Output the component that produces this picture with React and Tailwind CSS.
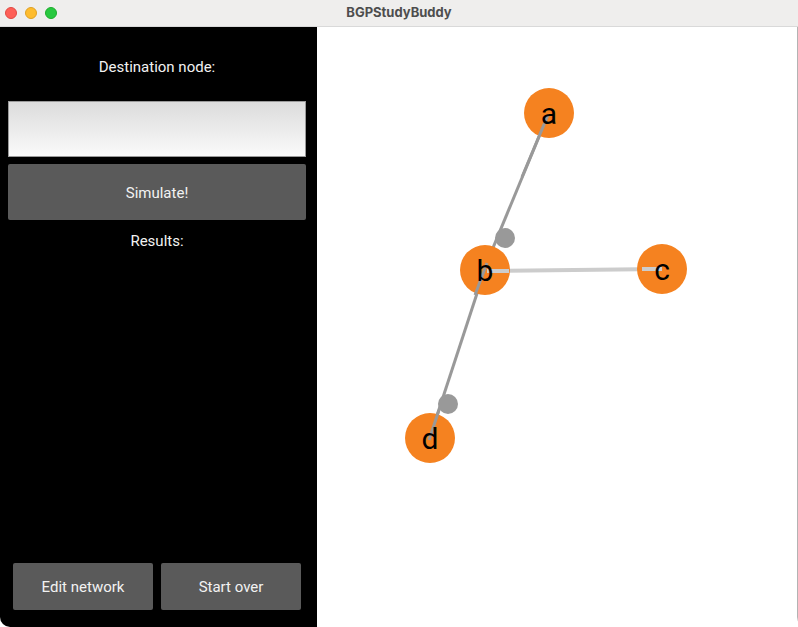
import React from 'react';

const nodes = [
    { id: 'a', x: 232, y: 86 },
    { id: 'b', x: 168, y: 243 },
    { id: 'c', x: 345, y: 242 },
    { id: 'd', x: 113, y: 411 },
];

const NetworkGraph = () => (
    <svg width="480" height="600" viewBox="0 0 480 600" className="block">
        {/* b - c link */}
        <line x1="168" y1="244" x2="345" y2="242" stroke="#cccccc" strokeWidth="4" />
        {/* a - b - d links */}
        <line x1="231" y1="88" x2="166" y2="245" stroke="#999999" strokeWidth="3" />
        <line x1="170" y1="236" x2="112" y2="413" stroke="#999999" strokeWidth="3" />
        {nodes.map((n) => (
            <circle key={n.id} cx={n.x} cy={n.y} r="25" fill="#f58220" />
        ))}
        {/* link ends drawn over the nodes */}
        <line x1="231" y1="88" x2="205" y2="150" stroke="#999999" strokeWidth="3" />
        <line x1="170" y1="236" x2="158" y2="268" stroke="#999999" strokeWidth="3" />
        <line x1="122" y1="383" x2="112" y2="413" stroke="#999999" strokeWidth="3" />
        <line x1="170" y1="244" x2="192" y2="244" stroke="#cccccc" strokeWidth="4" />
        <line x1="325" y1="242" x2="345" y2="242" stroke="#cccccc" strokeWidth="4" />
        <circle cx="188" cy="211" r="10" fill="#999999" />
        <circle cx="131" cy="377" r="10" fill="#999999" />
        {nodes.map((n) => (
            <text
                key={n.id}
                x={n.x}
                y={n.y + 11}
                textAnchor="middle"
                fontSize="30"
                fontFamily="Roboto, sans-serif"
                fill="#000000"
            >
                {n.id}
            </text>
        ))}
    </svg>
);

const App = () => {
    return (
        <div className="w-[798px] h-[627px] bg-white overflow-hidden rounded-b-[10px] flex flex-col" style={{ fontFamily: 'Roboto, "Liberation Sans", sans-serif' }}>
            {/* title bar */}
            <div className="h-[27px] shrink-0 bg-[#efeeed] border-b border-[#d9d9d9] flex items-center relative">
                <div className="flex items-center gap-[8px] pl-[5px]">
                    <span className="w-[12px] h-[12px] rounded-full bg-[#fe5f57] border border-[#e14942]" />
                    <span className="w-[12px] h-[12px] rounded-full bg-[#febc2e] border border-[#dfa123]" />
                    <span className="w-[12px] h-[12px] rounded-full bg-[#28c840] border border-[#1dad2b]" />
                </div>
                <div className="absolute inset-0 flex items-center justify-center text-[13px] font-bold text-[#4d4d4d]" style={{ fontFamily: '"Inter", "Liberation Sans", sans-serif' }}>
                    BGPStudyBuddy
                </div>
            </div>

            <div className="flex flex-1 min-h-0">
                {/* left controls */}
                <div className="w-[317px] bg-black flex flex-col text-[#f2f2f2] text-[15px]">
                    <div className="pt-[32px] text-center leading-[16px] pr-[3px]">Destination node:</div>
                    <div className="mt-[26px] ml-[8px] w-[298px] h-[56px] border border-[#9a9a9a] bg-gradient-to-b from-[#dcdcdc] to-[#fafafa]" />
                    <button className="mt-[7px] ml-[8px] w-[298px] h-[56px] pt-[3px] bg-[#5a5a5a] rounded-[2px] text-[#f2f2f2] text-[15px]">
                        Simulate!
                    </button>
                    <div className="mt-[13px] text-center leading-[16px] pr-[3px]">Results:</div>
                    <div className="flex-1" />
                    <div className="flex gap-[8px] pl-[13px] pb-[17px]">
                        <button className="w-[140px] h-[47px] pt-[2px] bg-[#5a5a5a] rounded-[2px] text-[15px]">Edit network</button>
                        <button className="w-[140px] h-[47px] pt-[2px] bg-[#5a5a5a] rounded-[2px] text-[15px]">Start over</button>
                    </div>
                </div>

                {/* graph canvas */}
                <div className="flex-1 bg-white border-r border-[#b3b3b3] overflow-hidden">
                    <NetworkGraph />
                </div>
            </div>
        </div>
    );
};

export default App;
